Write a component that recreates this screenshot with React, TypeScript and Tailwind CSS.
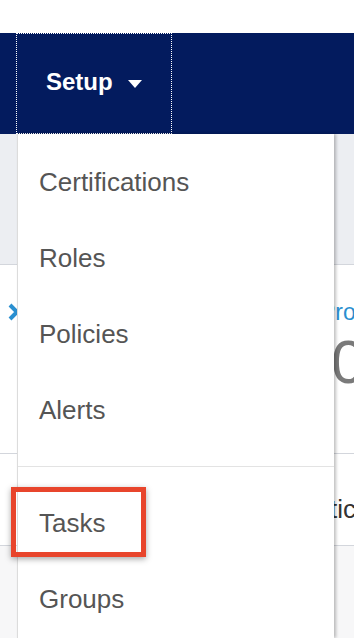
import React from "react";

const menuItems = ["Certifications", "Roles", "Policies", "Alerts"];
const lowerItems = ["Tasks", "Groups"];

const MenuItem = ({ label }: { label: string }) => (
  <div className="h-[76px] pl-[21px] pt-[23px] text-[26px] leading-[30px] text-[#555555]">
    {label}
  </div>
);

const App = () => {
  return (
    <div className="relative flex h-[638px] w-[354px] flex-col overflow-hidden bg-white font-['Liberation_Sans',Arial,sans-serif]">
      <div className="h-[33px] shrink-0 bg-white" />
      <nav className="flex h-[101px] shrink-0 bg-[#031b5e]">
        <button className="ml-[16px] flex h-full w-[156px] items-start gap-[15px] border border-dotted border-white pl-[29px] pt-[34px] text-[24px] font-bold leading-[28px] text-white">
          <span>Setup</span>
          <svg width="14" height="8" viewBox="0 0 14 8" className="mt-[12px]">
            <polygon points="0,0 14,0 7,8" fill="white" />
          </svg>
        </button>
      </nav>

      {/* page content behind the dropdown */}
      <div className="h-[131px] shrink-0 border-b border-[#d3d6dc] bg-[#eceef2]" />
      <div className="h-[189px] shrink-0 overflow-hidden border-b border-[#d3d6dc] bg-white">
        <div className="flex items-start pt-[34px]">
          <svg width="20" height="18" viewBox="0 0 20 18" className="mt-[4px] shrink-0">
            <polyline points="10,2 17,9 10,16" fill="none" stroke="#2a8fd0" strokeWidth="4" />
          </svg>
          <span className="shrink-0 whitespace-nowrap pl-[300px] text-[23px] leading-[26px] text-[#2a8fd0]">
            Progress
          </span>
        </div>
        <div className="whitespace-nowrap pl-[331px] pt-[6px] text-[62px] leading-[62px] text-[#7a7a7a]">
          0
        </div>
      </div>
      <div className="h-[92px] shrink-0 overflow-hidden border-b border-[#d3d6dc] bg-white">
        <div className="whitespace-nowrap pl-[330px] pt-[40px] text-[26px] leading-[30px] text-[#333333]">
          tics
        </div>
      </div>
      <div className="flex-1 bg-[#f7f7f8]" />

      {/* Setup dropdown */}
      <div className="absolute bottom-0 left-[17px] top-[134px] w-[317px] border-l border-[#dcdcdc] bg-white pt-[10px] shadow-[2px_0_3px_rgba(0,0,0,0.25)]">
        {menuItems.map((item) => (
          <MenuItem key={item} label={item} />
        ))}
        <div className="my-[18px] h-px bg-[#e3e3e3]" />
        {lowerItems.map((item) => (
          <MenuItem key={item} label={item} />
        ))}
      </div>

      {/* highlight */}
      <div className="absolute left-[11px] top-[487px] h-[70px] w-[135px] border-[5px] border-[#e8452c] shadow-[0_2px_6px_rgba(0,0,0,0.35)]" />
    </div>
  );
};

export default App;
